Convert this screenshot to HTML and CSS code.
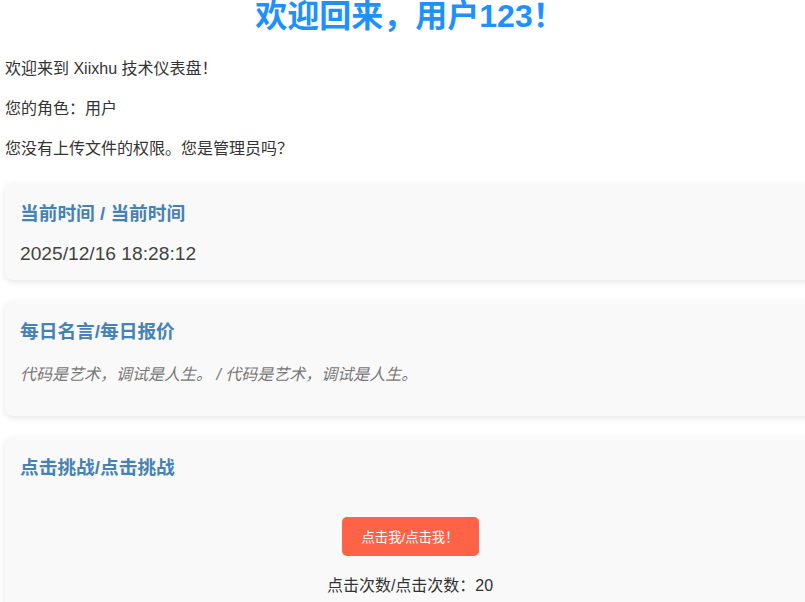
FILE: index.html
```html
<!DOCTYPE html>
<html lang="zh-CN">
<head>
  <meta charset="UTF-8">
  <meta name="viewport" content="width=device-width, initial-scale=1.0">
  <title>Xiixhu 技术仪表盘</title>
  <link rel="stylesheet" href="styles.css">
</head>
<body>
  <div class="page">
    <!-- Приветствие -->
    <h1 class="welcome">欢迎回来，用户123！</h1>
    <p>欢迎来到 Xiixhu 技术仪表盘！</p>
    <p>您的角色：用户</p>
    <p>您没有上传文件的权限。您是管理员吗？</p>

    <!-- Текущее время -->
    <div class="card">
      <h3>当前时间 / 当前时间</h3>
      <div class="clock">2025/12/16 18:28:12</div>
    </div>

    <!-- Цитата дня -->
    <div class="card">
      <h3>每日名言/每日报价</h3>
      <p class="quote">代码是艺术，调试是人生。 / 代码是艺术，调试是人生。</p>
    </div>

    <!-- Кликер -->
    <div class="card">
      <h3>点击挑战/点击挑战</h3>
      <div class="challenge">
        <button class="click-btn">点击我/点击我！</button>
        <p>点击次数/点击次数：<span class="count">20</span></p>
      </div>
    </div>
  </div>

  <script>
    var btn = document.querySelector('.click-btn');
    var countSpan = document.querySelector('.count');
    btn.addEventListener('click', function() {
      countSpan.textContent = parseInt(countSpan.textContent, 10) + 1;
    });
  </script>
</body>
</html>
```

FILE: styles.css
```css
/* Светлая тема */
html, body {
  overflow-x: hidden;
}
body {
  margin: 0;
  background: #fff;
  color: #333;
  font-family: "Liberation Sans", "Noto Sans CJK SC", sans-serif;
}
.page {
  width: 810px;
  padding-left: 5px;
}
.welcome {
  margin: 0 0 23px;
  font-size: 32px;
  line-height: 1;
  color: #1E90FF;
  text-align: center;
}
p {
  margin: 16px 0;
}
/* Карточки */
.card {
  background: #f9f9f9;
  border-radius: 8px;
  box-shadow: 0 2px 6px rgba(0,0,0,0.1);
  padding: 15px;
  margin-top: 21px;
}
.card:first-of-type {
  margin-top: 24px;
}
.card h3 {
  margin: 0 0 18px;
  color: #4682B4;
}
.clock {
  font-size: 1.2em;
  color: #444;
}
.quote {
  font-style: italic;
  color: #777;
}
.challenge {
  text-align: center;
  padding: 20px;
}
.click-btn {
  background: #FF6347;
  color: #fff;
  border: none;
  border-radius: 5px;
  padding: 10px 20px;
  font-family: inherit;
  cursor: pointer;
}
```
